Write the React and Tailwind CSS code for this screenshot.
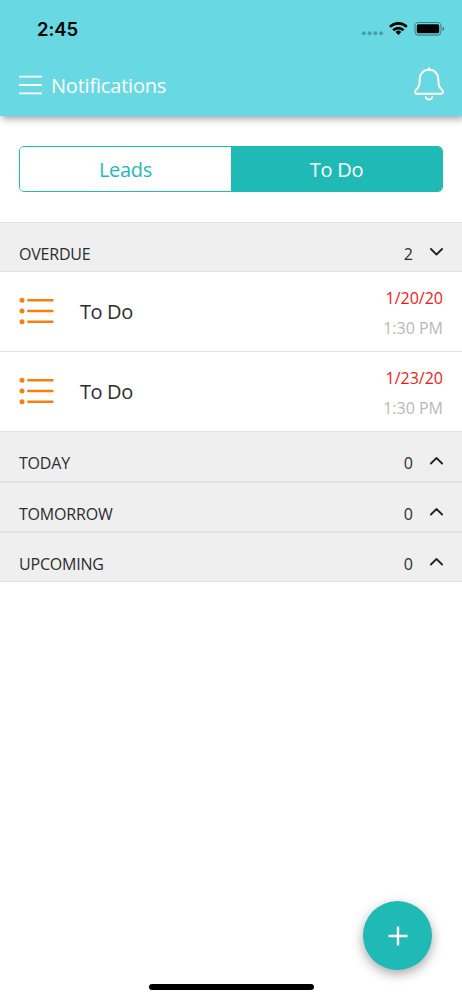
import React, { useState } from 'react';

const todos = [
    { id: 1, title: 'To Do', date: '1/20/20', time: '1:30 PM' },
    { id: 2, title: 'To Do', date: '1/23/20', time: '1:30 PM' }
];

const StatusBar = () => (
    <div className="flex h-[58px] items-center justify-between pl-[37px] pr-[18px]">
        <span className="font-['Inter',sans-serif] text-[18.5px] font-semibold leading-6 tracking-[-0.1px] text-black">2:45</span>
        <svg width="84" height="18" viewBox="0 0 84 18" className="block">
            <g fill="#000" fillOpacity="0.27">
                <circle cx="3.8" cy="13.2" r="2" />
                <circle cx="9.6" cy="13.2" r="2" />
                <circle cx="15.3" cy="13.2" r="2" />
                <circle cx="21.1" cy="13.2" r="2" />
            </g>
            <g fill="none" stroke="#000" strokeWidth="2.7">
                <path d="M29.9 6.9a12.2 12.2 0 0 1 17 0" />
                <path d="M33.2 10.3a7.4 7.4 0 0 1 10.4 0" />
            </g>
            <path d="M38.4 14.9l-2.9-2.9a4.2 4.2 0 0 1 5.8 0z" fill="#000" />
            <rect x="55" y="2.5" width="26" height="12.6" rx="3.6" fill="none" stroke="#000" strokeOpacity="0.4" strokeWidth="1.1" />
            <rect x="56.8" y="4.3" width="22.4" height="9" rx="1.600" fill="#000" />
            <path d="M82.6 6.5c2 .8 2 3.800 0 4.600z" fill="#000" fillOpacity="0.45" />
        </svg>
    </div>
);

const BellIcon = () => (
    <svg width="30" height="34" viewBox="0 0 30 34" fill="none" stroke="#fff" strokeWidth="2" strokeLinecap="round" strokeLinejoin="round" className="-mt-[3px]">
        <path d="M15 1.200v1.600" />
        <path d="M15 2.800C9.300 2.800 5.700 7 5.700 12.200C5.700 18.400 4.900 20.200 2 22.900C.2 24.900.9 26.700 3.100 26.700H26.900C29.100 26.700 29.800 24.900 28 22.900C25.100 20.200 24.300 18.400 24.300 12.200C24.300 7 20.700 2.800 15 2.800Z" />
        <path d="M11.700 30.100C12.300 33.200 17.700 33.200 18.300 30.100" />
    </svg>
);

const ListIcon = () => (
    <svg width="35" height="28" viewBox="0 0 35 28" className="-mt-[2px] block">
        <g fill="#f77f0b">
            <circle cx="3" cy="3.200" r="2.500" />
            <circle cx="3" cy="14" r="2.500" />
            <circle cx="3" cy="24.800" r="2.500" />
        </g>
        <path d="M9.200 3.200h24.300M9.200 14h24.300M9.200 24.800h24.300" stroke="#f77f0b" strokeWidth="2.400" strokeLinecap="round" />
    </svg>
);

const SectionHeader = ({ title, count, open, onToggle, className }) => (
    <button type="button" onClick={onToggle} className={`flex w-full items-end justify-between border-[#e1e1e1] bg-[#efefef] pl-[19px] pr-[19px] text-left text-[#2b2d2e] ${className}`}>
        <span className="text-base leading-[22px] tracking-[-0.2px]">{title}</span>
        <span className="flex items-end">
            <span className="text-base leading-[22px]">{count}</span>
            <svg width="13" height="22" viewBox="0 0 13 22" fill="none" stroke="#222" strokeWidth="1.800" strokeLinecap="round" strokeLinejoin="round" className="ml-[17px] block">
                <path d={open ? 'M.9 6L6.500 11.500L12.100 6' : 'M.9 11.500L6.500 6L12.100 11.500'} />
            </svg>
        </span>
    </button>
);

const TodoRow = ({ todo }) => (
    <div className="flex h-20 items-center border-b border-[#e1e1e1] px-[19px]">
        <ListIcon />
        <span className="ml-[26px] flex-1 text-[20px] leading-7 tracking-[-0.4px] text-[#2b2d2e]">{todo.title}</span>
        <div className="pt-[2px] text-right text-base leading-[30px]">
            <p className="text-[#f91616]">{todo.date}</p>
            <p className="text-[#b8b8b8]">{todo.time}</p>
        </div>
    </div>
);

const App = () => {
    const [tab, setTab] = useState('todo');
    const [open, setOpen] = useState({ overdue: true, today: false, tomorrow: false, upcoming: false });

    const toggle = (key) => setOpen({ ...open, [key]: !open[key] });

    return (
        <div className="relative flex h-[1000px] w-[462px] flex-col overflow-hidden bg-white font-['Open_Sans',sans-serif]">
            {/* Header */}
            <header className="h-[116px] shrink-0 bg-[#68d9e3] shadow-[2px_3px_7px_rgba(0,0,0,0.35)]">
                <StatusBar />
                <div className="flex h-[54px] items-center pl-[19px] pr-[18px]">
                    <svg width="23" height="20" viewBox="0 0 23 20" stroke="#fff" strokeWidth="1.800">
                        <path d="M0 1.700h23M0 10h23M0 18.300h23" />
                    </svg>
                    <h1 className="ml-[9px] flex-1 pt-[2px] text-[20px] leading-7 tracking-[-0.2px] text-white">Notifications</h1>
                    <BellIcon />
                </div>
            </header>

            {/* Tabs */}
            <div className="mx-[19px] mb-[30px] mt-[30px] flex h-[46px] shrink-0 overflow-hidden rounded-[5px] border border-[#1fbab6] text-[20px] tracking-[-0.3px]">
                <button type="button" onClick={() => setTab('leads')} className={`flex-1 pt-[2px] ${tab === 'leads' ? 'bg-[#1fbab6] text-white' : 'bg-white text-[#1fbab6]'}`}>Leads</button>
                <button type="button" onClick={() => setTab('todo')} className={`flex-1 pt-[2px] ${tab === 'todo' ? 'bg-[#1fbab6] text-white' : 'bg-white text-[#1fbab6]'}`}>To Do</button>
            </div>

            {/* Sections */}
            <div>
                <SectionHeader title="OVERDUE" count={2} open={open.overdue} onToggle={() => toggle('overdue')} className="h-[50px] border-y pb-[6px]" />
                {open.overdue && todos.map((todo) => <TodoRow key={todo.id} todo={todo} />)}
                <SectionHeader title="TODAY" count={0} open={open.today} onToggle={() => toggle('today')} className="h-[51px] border-b-2 pb-[7px]" />
                <SectionHeader title="TOMORROW" count={0} open={open.tomorrow} onToggle={() => toggle('tomorrow')} className="h-[50px] border-b-2 pb-[6px]" />
                <SectionHeader title="UPCOMING" count={0} open={open.upcoming} onToggle={() => toggle('upcoming')} className="h-[49px] border-b pb-[6px]" />
            </div>

            {/* Add button */}
            <button type="button" className="absolute bottom-[30px] right-[30px] flex size-[69px] items-center justify-center rounded-full bg-[#1fbab6] shadow-[0_4px_12px_rgba(0,0,0,0.35)]">
                <svg width="20" height="20" viewBox="0 0 20 20" stroke="#fff" strokeWidth="2.400">
                    <path d="M10 0.500v19M0.500 10h19" />
                </svg>
            </button>

            {/* Home indicator */}
            <div className="absolute bottom-[10px] left-[149px] h-[6px] w-[165px] rounded-full bg-black"></div>
        </div>
    );
};

export default App;
